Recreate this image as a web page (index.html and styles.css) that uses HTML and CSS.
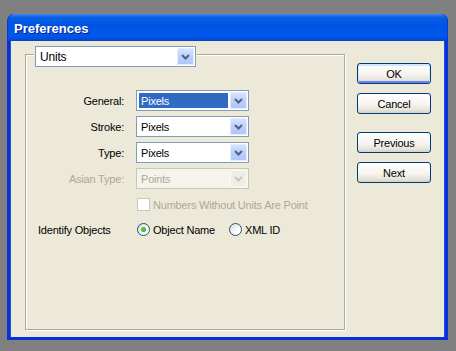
FILE: index.html
```html
<!DOCTYPE html>
<html lang="en">
<head>
  <meta charset="UTF-8">
  <title>Preferences</title>
  <link rel="stylesheet" href="styles.css">
</head>
<body>

  <div class="window">
    <div class="titlebar">
      <span class="title">Preferences</span>
    </div>
    <div class="client">
      <div class="group">
        <div class="select units">
          <span class="value">Units</span>
          <span class="arrow"><svg width="9" height="6" viewBox="0 0 9 6"><polyline points="1,1 4.5,4.5 8,1" /></svg></span>
        </div>

        <div class="form">
          <div class="label">General:</div>
          <div class="select">
            <span class="value selected">Pixels</span>
            <span class="arrow"><svg width="9" height="6" viewBox="0 0 9 6"><polyline points="1,1 4.5,4.5 8,1" /></svg></span>
          </div>

          <div class="label">Stroke:</div>
          <div class="select">
            <span class="value">Pixels</span>
            <span class="arrow"><svg width="9" height="6" viewBox="0 0 9 6"><polyline points="1,1 4.5,4.5 8,1" /></svg></span>
          </div>

          <div class="label">Type:</div>
          <div class="select">
            <span class="value">Pixels</span>
            <span class="arrow"><svg width="9" height="6" viewBox="0 0 9 6"><polyline points="1,1 4.5,4.5 8,1" /></svg></span>
          </div>

          <div class="label disabled">Asian Type:</div>
          <div class="select is-disabled">
            <span class="value">Points</span>
            <span class="arrow"><svg width="9" height="6" viewBox="0 0 9 6"><polyline points="1,1 4.5,4.5 8,1" /></svg></span>
          </div>

          <div class="spacer check-row"></div>
          <div class="check check-row disabled">
            <span class="box"></span>
            <span>Numbers Without Units Are Point</span>
          </div>

          <div class="label left radio-row">Identify Objects</div>
          <div class="radios radio-row">
            <span class="radio checked"><span class="dot"></span></span>
            <span class="radio-text">Object Name</span>
            <span class="radio"></span>
            <span>XML ID</span>
          </div>
        </div>
      </div>

      <div class="buttons">
        <button class="default">OK</button>
        <button>Cancel</button>
        <button class="gap">Previous</button>
        <button>Next</button>
      </div>
    </div>
  </div>

</body>
</html>
```

FILE: styles.css
```css
body {
  margin: 0;
  height: 351px;
  overflow: hidden;
  background: #808080;
  font-family: 'Liberation Sans', Arial, sans-serif;
  font-size: 11px;
  letter-spacing: -0.2px;
  color: #000;
}

.window {
  margin: 14px 0 0 7px;
  width: 441px;
}

.titlebar {
  height: 27px;
  padding-left: 7px;
  display: flex;
  align-items: center;
  border-radius: 7px 7px 0 0;
  background: linear-gradient(#3d8bf6 0%, #0a5fe6 12%, #0054e3 40%, #0058ea 80%, #0050dd 92%, #0042c8 100%);
  box-shadow: inset 1px 0 0 #0a3bd0, inset -1px 0 0 #0a3bd0;
}

.title {
  color: #fff;
  font-weight: bold;
  font-size: 13px;
  letter-spacing: 0;
  text-shadow: 1px 1px 0 #0a1e8c;
  padding-top: 2px;
}

.client {
  height: 296px;
  display: flex;
  align-items: flex-start;
  background: #ece9d8;
  border: 3px solid #0831d9;
  border-top: none;
  box-shadow: inset 1px 0 0 #1653e4, inset -1px 0 0 #1653e4;
}

.group {
  box-sizing: border-box;
  width: 320px;
  height: 276px;
  margin: 13px 0 0 15px;
  padding-left: 9px;
  border: 1px solid #aca899;
  box-shadow: inset 1px 1px 0 #fff, 1px 1px 0 #fff;
}

/* combo box */
.select {
  box-sizing: border-box;
  width: 113px;
  height: 21px;
  display: flex;
  padding: 1px;
  background: #fff;
  border: 1px solid #7f9db9;
}

.select .value {
  flex: 1;
  display: flex;
  align-items: center;
  padding-left: 2px;
  margin: 1px 2px 1px 1px;
}

.select .selected {
  background: #316ac5;
  color: #fff;
}

.select .arrow {
  width: 17px;
  display: flex;
  align-items: center;
  justify-content: center;
  border-radius: 2px;
  background: linear-gradient(#dbe6fe, #bdd0fb 50%, #aec4f8);
  box-shadow: inset 0 0 0 1px #e4ecfe;
}

.select .arrow polyline {
  fill: none;
  stroke: #4d6185;
  stroke-width: 2;
}

.select.is-disabled {
  border-color: #c9c7ba;
  background: #f4f3ec;
  color: #aca899;
}

.select.is-disabled .arrow {
  background: #efeee6;
  box-shadow: inset 0 0 0 1px #f8f8f4;
}

.select.is-disabled .arrow polyline {
  stroke: #c9c7ba;
}

.units {
  width: 161px;
  margin-top: -9px;
  box-shadow: 0 0 0 1px #ece9d8;
}

.units .value {
  font-size: 12px;
}

/* form grid */
.form {
  display: grid;
  grid-template-columns: 86px 113px;
  column-gap: 12px;
  row-gap: 5px;
  margin: 23px 0 0 3px;
}

.label {
  display: flex;
  align-items: center;
  justify-content: flex-end;
}

.label.left {
  justify-content: flex-start;
}

.disabled {
  color: #aca899;
}

.check-row {
  margin-top: 4px;
}

.radio-row {
  margin-top: 7px;
}

.check,
.radios {
  display: flex;
  align-items: center;
  white-space: nowrap;
  padding-left: 1px;
  height: 13px;
}

.check .box {
  flex: none;
  box-sizing: border-box;
  width: 13px;
  height: 13px;
  margin-right: 3px;
  background: #fff;
  border: 1px solid #cac8bb;
}

.radio {
  flex: none;
  box-sizing: border-box;
  width: 13px;
  height: 13px;
  margin-right: 3px;
  display: flex;
  align-items: center;
  justify-content: center;
  border-radius: 50%;
  border: 1px solid #1c5180;
  background: linear-gradient(135deg, #dcdcd5, #fff 70%);
}

.radio .dot {
  width: 5px;
  height: 5px;
  border-radius: 50%;
  background: radial-gradient(circle at 40% 40%, #55d751, #21a121);
}

.radio-text {
  flex: none;
  margin-right: 14px;
}

/* buttons */
.buttons {
  display: flex;
  flex-direction: column;
  gap: 9px;
  margin: 22px 0 0 12px;
}

button {
  width: 74px;
  height: 21px;
  padding: 0;
  font-family: inherit;
  font-size: 11px;
  letter-spacing: -0.2px;
  color: #000;
  border: 1px solid #003c74;
  border-radius: 3px;
  background: linear-gradient(#ffffff, #f5f4f0 55%, #e6e3da 85%, #d6d0c5);
}

button.default {
  box-shadow: inset 0 1px 0 1px #cee7ff, inset 0 -1px 0 1px #6982ee;
}

button.gap {
  margin-top: 9px;
}
```
